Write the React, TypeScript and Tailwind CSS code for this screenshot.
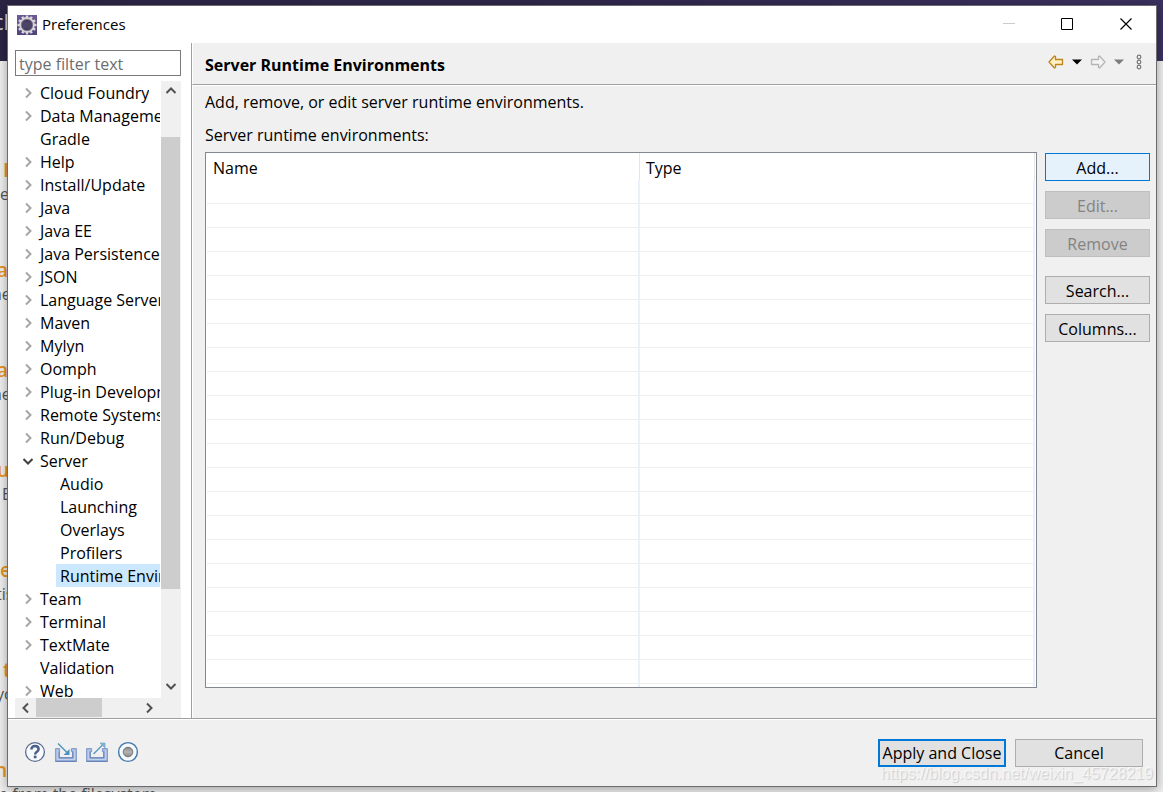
import React from "react";

type TreeItem = { label: string; level?: 1; state?: "closed" | "open"; selected?: boolean };

const TREE: TreeItem[] = [
  { label: "Cloud Foundry", state: "closed" },
  { label: "Data Management", state: "closed" },
  { label: "Gradle" },
  { label: "Help", state: "closed" },
  { label: "Install/Update", state: "closed" },
  { label: "Java", state: "closed" },
  { label: "Java EE", state: "closed" },
  { label: "Java Persistence", state: "closed" },
  { label: "JSON", state: "closed" },
  { label: "Language Servers", state: "closed" },
  { label: "Maven", state: "closed" },
  { label: "Mylyn", state: "closed" },
  { label: "Oomph", state: "closed" },
  { label: "Plug-in Development", state: "closed" },
  { label: "Remote Systems", state: "closed" },
  { label: "Run/Debug", state: "closed" },
  { label: "Server", state: "open" },
  { label: "Audio", level: 1 },
  { label: "Launching", level: 1 },
  { label: "Overlays", level: 1 },
  { label: "Profilers", level: 1 },
  { label: "Runtime Environments", level: 1, selected: true },
  { label: "Team", state: "closed" },
  { label: "Terminal", state: "closed" },
  { label: "TextMate", state: "closed" },
  { label: "Validation" },
  { label: "Web", state: "closed" },
];

const WELCOME = [
  { title: "I", text: "e", titleIndent: "pl-[3px]", textIndent: "pl-0" },
  { title: "a", text: "ne", titleIndent: "-ml-[3px]", textIndent: "-ml-[8px]" },
  { title: "a", text: "ne", titleIndent: "-ml-[3px]", textIndent: "-ml-[8px]" },
  { title: "u", text: "E", titleIndent: "-ml-[3px]", textIndent: "pl-[2px]" },
  { title: "e", text: "tis", titleIndent: "pl-0", textIndent: "-ml-[4px]" },
  { title: "t", text: "yo", titleIndent: "pl-[3px]", textIndent: "-ml-[4px]" },
  { title: "n", text: "e from the filesystem", titleIndent: "-ml-[5px]", textIndent: "-ml-px" },
];

function Chevron({ d, className }: { d: string; className: string }) {
  return (
    <svg viewBox="0 0 12 12" className={className} fill="none" stroke="currentColor" strokeWidth="2" aria-hidden="true">
      <path d={d} />
    </svg>
  );
}

const RIGHT = "M4 1.5 8.5 6 4 10.5";
const LEFT = "M8 1.5 3.5 6 8 10.5";
const DOWN = "M1.5 4 6 8.5 10.5 4";
const UP = "M1.5 8 6 3.5 10.5 8";

function AppIcon() {
  const teeth = Array.from({ length: 12 }, (_, i) => i * 30);
  return (
    <svg viewBox="0 0 20 20" className="size-5 shrink-0" aria-hidden="true">
      <defs>
        <linearGradient id="app-bg" x2="0" y2="1">
          <stop stopColor="#6b5a93" />
          <stop offset="1" stopColor="#50427c" />
        </linearGradient>
      </defs>
      <rect width="20" height="20" fill="url(#app-bg)" />
      {teeth.map((a) => (
        <rect key={a} x="8.8" y="0.5" width="2.4" height="3" fill="#d9d8dc" transform={`rotate(${a} 10 10)`} />
      ))}
      <circle cx="10" cy="10" r="6.9" fill="#3b3452" stroke="#d4d2d6" strokeWidth="2" />
      <circle cx="10" cy="10" r="5.6" fill="#423a5e" stroke="#8f8a98" strokeWidth="0.7" />
      <path d="M5.5 8h9M5 10h10M5.5 12h9" stroke="#5d5577" strokeWidth="0.8" />
    </svg>
  );
}

function NavArrow({ forward = false }: { forward?: boolean }) {
  return (
    <svg viewBox="0 0 16 14" className="h-3.5 w-4" aria-hidden="true">
      <path
        d={forward ? "M1.5 4.5h7v-3l1-.5 5.5 6-5.5 6-1-.5v-3h-7z" : "M14.5 4.5h-7v-3L6.5 1 1 7l5.5 6 1-.5v-3h7z"}
        fill={forward ? "#f4f4f4" : "#fff1c4"}
        stroke={forward ? "#b4b4b4" : "#bd841c"}
        strokeWidth="1.3"
        strokeLinejoin="round"
      />
    </svg>
  );
}

function Caret({ className }: { className: string }) {
  return (
    <svg viewBox="0 0 10 6" className={className} fill="currentColor" aria-hidden="true">
      <path d="M0 .5h10L5 5.5z" />
    </svg>
  );
}

function HelpIcon() {
  return (
    <svg viewBox="0 0 22 22" className="size-[22px]" fill="none" aria-hidden="true">
      <circle cx="11" cy="11" r="9.4" fill="#f7f9fc" stroke="#5a6e90" strokeWidth="1.3" />
      <path d="M7.4 8.6c0-2.2 1.5-3.6 3.6-3.6s3.6 1.3 3.6 3.2c0 2.6-3.4 2.6-3.4 5.2" stroke="#495f88" strokeWidth="2.5" />
      <rect x="9.8" y="14.6" width="2.7" height="2.7" fill="#495f88" />
    </svg>
  );
}

function TransferIcon({ outward = false }: { outward?: boolean }) {
  return (
    <svg viewBox="0 0 22 22" className="size-[22px]" fill="none" aria-hidden="true">
      <path
        d={outward ? "M.6 7.6h5v3H4.2v6.2h13.6v-6.2h-1.4v-3h5v12.8H.6z" : "M.6 7.6h4v3h-.4v6.2h13.6v-6.2h-1.4v-3h5v12.8H.6z"}
        fill="#a9bfe2"
        stroke="#7d98c8"
        strokeWidth="1"
      />
      <path d="M2.4 9.5v9h17.2v-9" stroke="#c3d2ea" strokeWidth="1" />
      <path d="M4.2 10.5v6.3h13.6v-6.3" stroke="#6482b8" strokeWidth="1" />
      <path d="M.5 20.3h21" stroke="#6482b8" strokeWidth="1.2" />
      {outward ? (
        <>
          <path d="M7.5 13 17 3.5" stroke="#5b9bc0" strokeWidth="1.4" />
          <path d="M14 2h5v5z" fill="#7fb0cd" stroke="#7fb0cd" strokeWidth=".8" />
        </>
      ) : (
        <>
          <path d="M3 2.5l9.5 9.5" stroke="#4b93bd" strokeWidth="1.4" />
          <path d="M14.5 8v6h-6z" fill="#4b93bd" />
        </>
      )}
    </svg>
  );
}

function RecordIcon() {
  return (
    <svg viewBox="0 0 22 22" className="size-[22px]" aria-hidden="true">
      <defs>
        <linearGradient id="record-dot" x2="0" y2="1">
          <stop stopColor="#858585" />
          <stop offset=".5" stopColor="#b4b4b4" />
          <stop offset="1" stopColor="#858585" />
        </linearGradient>
      </defs>
      <circle cx="11" cy="11" r="9.4" fill="#f5fafe" stroke="#4076a8" strokeWidth="1.4" />
      <circle cx="11" cy="11" r="4.8" fill="url(#record-dot)" stroke="#777" strokeWidth="1" />
    </svg>
  );
}

function PushButton({ children, variant = "normal" }: { children: React.ReactNode; variant?: "normal" | "hot" | "off" }) {
  const look = {
    normal: "border-[#adadad] bg-[#e1e1e1] text-black",
    hot: "border-[#0078d7] bg-[#e5f1fb] text-black",
    off: "border-[#bfbfbf] bg-[#cccccc] text-[#838383]",
  }[variant];
  return (
    <button type="button" disabled={variant === "off"} className={`flex h-7 w-full items-center justify-center border pt-px ${look}`}>
      {children}
    </button>
  );
}

function Welcome() {
  return (
    <div className="absolute inset-0 overflow-hidden bg-[#efefef]">
      <div className="h-[61px] bg-[#2e2746] bg-linear-to-r from-[#2b2544] via-[#30284c] to-[#3b3160]">
        <p className="-ml-[7px] pt-[7px] text-[22px] leading-7 text-[#d6d3df]">cl</p>
      </div>
      <div className="pt-24">
        {WELCOME.map((w, i) => (
          <div key={i} className="h-[100px] whitespace-nowrap">
            <p className={`text-[19px] leading-[26px] font-semibold text-[#e8921e] ${w.titleIndent}`}>{w.title}</p>
            <p className={`text-base leading-[22px] text-[#555] ${w.textIndent}`}>{w.text}</p>
          </div>
        ))}
      </div>
    </div>
  );
}

function Tree() {
  return (
    <div className="flex min-h-0 flex-1 flex-col">
      <div className="flex min-h-0 flex-1">
        <ul role="tree" aria-label="Preference pages" className="min-w-0 flex-1 overflow-hidden pr-px">
          {TREE.map((t) => (
            <li
              key={t.label}
              role="treeitem"
              aria-selected={!!t.selected}
              className={`flex h-[23px] items-center whitespace-nowrap ${t.level ? "pl-[41px]" : "pl-[7px]"}`}
            >
              {!t.level && (
                <span className="w-[14px] shrink-0">
                  {t.state && (
                    <Chevron
                      d={t.state === "open" ? DOWN : RIGHT}
                      className={t.state === "open" ? "size-3 text-[#404040]" : "size-3 text-[#a6a6a6]"}
                    />
                  )}
                </span>
              )}
              <span className={`h-full min-w-0 overflow-hidden pt-px pl-1 leading-[22px] ${t.selected ? "flex-1 bg-[#cce8ff]" : ""}`}>
                {t.label}
              </span>
            </li>
          ))}
        </ul>
        <div className="flex w-5 flex-col items-center bg-[#f0f0f0] pr-px text-[#505050]">
          <button type="button" aria-label="Scroll up" className="flex h-5 items-center">
            <Chevron d={UP} className="size-3" />
          </button>
          <div className="flex w-full flex-1 flex-col">
            <div className="grow-[36]" />
            <div className="grow-[452] bg-[#cdcdcd]" />
            <div className="grow-[89]" />
          </div>
          <button type="button" aria-label="Scroll down" className="flex h-5 items-start pt-0.5">
            <Chevron d={DOWN} className="size-3" />
          </button>
        </div>
      </div>
      <div className="flex h-5 bg-[#f0f0f0] pr-[22px] text-[#505050]">
        <button type="button" aria-label="Scroll left" className="flex w-[21px] items-center justify-center">
          <Chevron d={LEFT} className="size-3" />
        </button>
        <div className="mb-px w-[66px] bg-[#cdcdcd]" />
        <div className="flex-1" />
        <button type="button" aria-label="Scroll right" className="flex w-5 items-center justify-center">
          <Chevron d={RIGHT} className="size-3" />
        </button>
      </div>
    </div>
  );
}

export default function App() {
  const rows = Array.from({ length: 21 }, (_, i) => i);
  return (
    <div className="relative h-screen overflow-hidden pt-[5px] pr-[6px] pb-[5px] pl-[7px] font-['Open_Sans','Noto_Sans_CJK_SC',sans-serif] text-base text-black">
      <Welcome />
      <main className="relative flex h-full flex-col border border-[#6b6b70] bg-[#f0f0f0] shadow-[0_2px_10px_rgba(0,0,0,0.35)]">
        <header className="flex h-[37px] shrink-0 items-center bg-white pl-[9px]">
          <AppIcon />
          <h1 className="pl-[5px] text-[15px]">Preferences</h1>
          <div className="ml-auto flex items-center">
            <button type="button" disabled aria-label="Minimize" className="flex w-[58px] justify-center text-[#cccccc]">
              <svg viewBox="0 0 13 13" className="size-[13px]" stroke="currentColor" aria-hidden="true">
                <path d="M0 5.5h12" />
              </svg>
            </button>
            <button type="button" aria-label="Maximize" className="flex w-[58px] justify-center">
              <svg viewBox="0 0 13 13" className="size-[13px]" fill="none" stroke="currentColor" aria-hidden="true">
                <path d="M.5.5h11v11H.5z" />
              </svg>
            </button>
            <button type="button" aria-label="Close" className="flex w-[60px] justify-center">
              <svg viewBox="0 0 13 13" className="size-[13px]" stroke="currentColor" strokeWidth="1.2" aria-hidden="true">
                <path d="M.5.5l11 11M11.5.5l-11 11" />
              </svg>
            </button>
          </div>
        </header>

        <div className="flex min-h-0 flex-1">
          <nav className="flex w-[183px] shrink-0 flex-col bg-white pt-[7px] pr-[10px] pl-[7px]">
            <input
              type="text"
              aria-label="type filter text"
              placeholder="type filter text"
              className="mb-[5px] h-[26px] w-full border border-[#7a7a7a] bg-white px-[3px] pt-px placeholder:text-[#6d6d6d]"
            />
            <Tree />
          </nav>
          <section className="flex min-w-0 flex-1 flex-col border-l border-[#a0a0a0]">
            <div className="flex h-[42px] shrink-0 items-center justify-between border-b border-l border-b-[#a0a0a0] border-l-white pr-[14px] pl-3">
              <h2 className="pt-[2px] font-bold">Server Runtime Environments</h2>
              <div className="flex items-center pb-1">
                <button type="button" aria-label="Back"><NavArrow /></button>
                <button type="button" aria-label="Back history" className="pl-2"><Caret className="h-1.5 w-2.5" /></button>
                <button type="button" disabled aria-label="Forward" className="pl-2"><NavArrow forward /></button>
                <button type="button" disabled aria-label="Forward history" className="pl-2 text-[#7c7c7c]">
                  <Caret className="h-1.5 w-2.5" />
                </button>
                <button type="button" aria-label="View menu" className="pl-3">
                  <svg viewBox="0 0 6 16" className="h-4 w-1.5" fill="none" stroke="#777" strokeWidth="1.2" aria-hidden="true">
                    <circle cx="3" cy="3" r="1.8" />
                    <circle cx="3" cy="8" r="1.8" />
                    <circle cx="3" cy="13" r="1.8" />
                  </svg>
                </button>
              </div>
            </div>
            <div className="flex min-h-0 flex-1 flex-col border-t border-l border-white pr-[6px] pb-[30px] pl-3">
              <p className="pt-[5px] leading-[22px]">Add, remove, or edit server runtime environments.</p>
              <p className="pt-[11px] leading-[22px]">Server runtime environments:</p>
              <div className="mt-[6px] flex min-h-0 flex-1 gap-2">
                <div className="min-w-0 flex-1 overflow-hidden border border-[#828790] bg-white pr-px pl-px">
                  <table className="h-full w-full table-fixed border-separate border-spacing-0" aria-label="Server runtime environments">
                    <colgroup>
                      <col className="w-[433px]" />
                      <col />
                    </colgroup>
                    <thead>
                      <tr className="h-[27px] text-left">
                        <th className="border-r border-[#e5e5e5] p-0 pt-0.5 pl-1.5 font-normal">Name</th>
                        <th className="border-r border-[#e5e5e5] p-0 pt-0.5 pl-1.5 font-normal">Type</th>
                      </tr>
                    </thead>
                    <tbody>
                      {rows.map((r) => (
                        <tr key={r} className="h-6">
                          <td className="border-r-2 border-b border-r-[#e9f2fc] border-b-[#eeeeee] p-0" />
                          <td className="border-r-2 border-b border-r-[#e9f2fc] border-b-[#eeeeee] p-0" />
                        </tr>
                      ))}
                      <tr>
                        <td className="border-r-2 border-r-[#e9f2fc] p-0" />
                        <td className="border-r-2 border-r-[#e9f2fc] p-0" />
                      </tr>
                    </tbody>
                  </table>
                </div>
                <div className="flex w-[105px] shrink-0 flex-col gap-2.5 pt-px">
                  <PushButton variant="hot">Add...</PushButton>
                  <PushButton variant="off">Edit...</PushButton>
                  <PushButton variant="off">Remove</PushButton>
                  <div className="flex flex-col gap-2.5 pt-[9px]">
                    <PushButton>Search...</PushButton>
                    <PushButton>Columns...</PushButton>
                  </div>
                </div>
              </div>
            </div>
          </section>
        </div>

        <footer className="shrink-0 border-t border-[#a0a0a0]">
          <div className="flex h-[67px] items-center border-t border-white pr-[13px] pl-4">
            <div className="flex gap-[9px] pb-0.5">
              <button type="button" aria-label="Help"><HelpIcon /></button>
              <button type="button" aria-label="Import preferences"><TransferIcon /></button>
              <button type="button" aria-label="Export preferences"><TransferIcon outward /></button>
              <button type="button" aria-label="Record preferences"><RecordIcon /></button>
            </div>
            <div className="ml-auto flex gap-[9px]">
              <button type="button" className="h-7 w-32 border-2 border-[#0078d7] bg-[#e1e1e1] whitespace-nowrap leading-6">
                Apply and Close
              </button>
              <button type="button" className="h-7 w-32 border border-[#adadad] bg-[#e1e1e1] leading-6">Cancel</button>
            </div>
          </div>
        </footer>
      </main>
      <p className="pointer-events-none absolute right-2.5 bottom-2 font-['Liberation_Sans',sans-serif] text-base leading-5 text-white/60 [text-shadow:1px_1px_1px_rgba(0,0,0,0.15)]">
        https://blog.csdn.net/weixin_45728219
      </p>
    </div>
  );
}
